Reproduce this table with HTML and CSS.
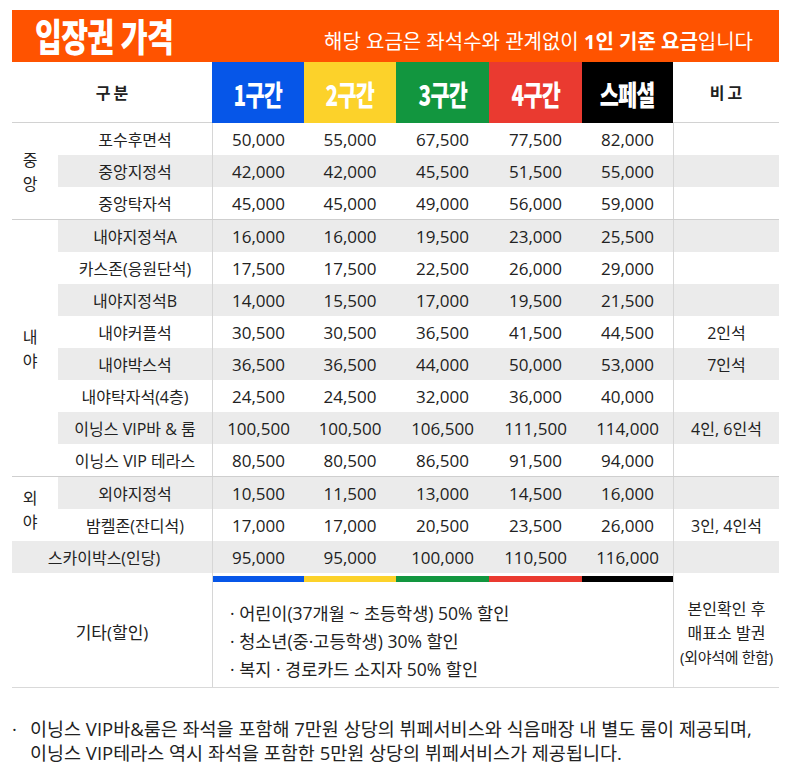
FILE: index.html
```html
<!DOCTYPE html>
<html lang="ko">
<head>
<meta charset="utf-8">
<title>입장권 가격</title>
<link rel="stylesheet" href="styles.css">
</head>
<body>
<div class="page">
  <header class="banner">
    <h1 class="title">입장권 가격</h1>
    <p class="subtitle">해당 요금은 좌석수와 관계없이 <strong>1인 기준 요금</strong>입니다</p>
  </header>

  <div class="thead">
    <div class="th-plain">구분</div>
    <div class="zone z1"><span>1구간</span></div>
    <div class="zone z2"><span>2구간</span></div>
    <div class="zone z3"><span>3구간</span></div>
    <div class="zone z4"><span>4구간</span></div>
    <div class="zone z5"><span>스페셜</span></div>
    <div class="th-plain">비고</div>
  </div>

  <div class="group first">
    <div class="glabel"><span>중</span><span>앙</span></div>
    <div class="grows">
      <div class="row"><div class="seat">포수후면석</div><div class="num first">50,000</div><div class="num">55,000</div><div class="num">67,500</div><div class="num">77,500</div><div class="num">82,000</div><div class="note"></div></div>
      <div class="row alt"><div class="seat">중앙지정석</div><div class="num first">42,000</div><div class="num">42,000</div><div class="num">45,500</div><div class="num">51,500</div><div class="num">55,000</div><div class="note"></div></div>
      <div class="row"><div class="seat">중앙탁자석</div><div class="num first">45,000</div><div class="num">45,000</div><div class="num">49,000</div><div class="num">56,000</div><div class="num">59,000</div><div class="note"></div></div>
    </div>
  </div>

  <div class="group">
    <div class="glabel"><span>내</span><span>야</span></div>
    <div class="grows">
      <div class="row alt"><div class="seat">내야지정석A</div><div class="num first">16,000</div><div class="num">16,000</div><div class="num">19,500</div><div class="num">23,000</div><div class="num">25,500</div><div class="note"></div></div>
      <div class="row"><div class="seat">카스존(응원단석)</div><div class="num first">17,500</div><div class="num">17,500</div><div class="num">22,500</div><div class="num">26,000</div><div class="num">29,000</div><div class="note"></div></div>
      <div class="row alt"><div class="seat">내야지정석B</div><div class="num first">14,000</div><div class="num">15,500</div><div class="num">17,000</div><div class="num">19,500</div><div class="num">21,500</div><div class="note"></div></div>
      <div class="row"><div class="seat">내야커플석</div><div class="num first">30,500</div><div class="num">30,500</div><div class="num">36,500</div><div class="num">41,500</div><div class="num">44,500</div><div class="note">2인석</div></div>
      <div class="row alt"><div class="seat">내야박스석</div><div class="num first">36,500</div><div class="num">36,500</div><div class="num">44,000</div><div class="num">50,000</div><div class="num">53,000</div><div class="note">7인석</div></div>
      <div class="row"><div class="seat">내야탁자석(4층)</div><div class="num first">24,500</div><div class="num">24,500</div><div class="num">32,000</div><div class="num">36,000</div><div class="num">40,000</div><div class="note"></div></div>
      <div class="row alt"><div class="seat">이닝스 VIP바 &amp; 룸</div><div class="num first">100,500</div><div class="num">100,500</div><div class="num">106,500</div><div class="num">111,500</div><div class="num">114,000</div><div class="note">4인, 6인석</div></div>
      <div class="row"><div class="seat">이닝스 VIP 테라스</div><div class="num first">80,500</div><div class="num">80,500</div><div class="num">86,500</div><div class="num">91,500</div><div class="num">94,000</div><div class="note"></div></div>
    </div>
  </div>

  <div class="group">
    <div class="glabel"><span>외</span><span>야</span></div>
    <div class="grows">
      <div class="row alt"><div class="seat">외야지정석</div><div class="num first">10,500</div><div class="num">11,500</div><div class="num">13,000</div><div class="num">14,500</div><div class="num">16,000</div><div class="note"></div></div>
      <div class="row"><div class="seat">밤켈존(잔디석)</div><div class="num first">17,000</div><div class="num">17,000</div><div class="num">20,500</div><div class="num">23,500</div><div class="num">26,000</div><div class="note">3인, 4인석</div></div>
    </div>
  </div>

  <div class="row sky alt"><div class="seat">스카이박스(인당)</div><div class="num first">95,000</div><div class="num">95,000</div><div class="num">100,000</div><div class="num">110,500</div><div class="num">116,000</div><div class="note"></div></div>

  <div class="etc">
    <div class="etc-label">기타(할인)</div>
    <div class="etc-main">
      <div class="bar"><i class="z1"></i><i class="z2"></i><i class="z3"></i><i class="z4"></i><i class="z5"></i></div>
      <ul class="discounts">
        <li>· 어린이(37개월 ~ 초등학생) 50% 할인</li>
        <li>· 청소년(중·고등학생) 30% 할인</li>
        <li>· 복지 · 경로카드 소지자 50% 할인</li>
      </ul>
    </div>
    <div class="etc-note">
      <span>본인확인 후</span>
      <span>매표소 발권</span>
      <span class="small">(외야석에 한함)</span>
    </div>
  </div>

  <div class="foot">
    <span class="dot">·</span>
    <p>이닝스 VIP바&amp;룸은 좌석을 포함해 7만원 상당의 뷔페서비스와 식음매장 내 별도 룸이 제공되며,<br>이닝스 VIP테라스 역시 좌석을 포함한 5만원 상당의 뷔페서비스가 제공됩니다.</p>
  </div>
</div>
</body>
</html>
```

FILE: styles.css
```css
body {
  margin: 0;
  padding: 10px 0 0 12px;
  background: #fff;
  color: #222;
  font-family: "Open Sans", "Noto Sans CJK KR", sans-serif;
}

.page {
  width: 767px;
}

.banner {
  height: 52px;
  box-sizing: border-box;
  padding: 0 26px 0 23px;
  background: #ff5300;
  color: #fff;
  display: flex;
  align-items: center;
  justify-content: space-between;
}

.title {
  margin: -3px 0 0;
  font-family: "Noto Sans CJK KR", sans-serif;
  font-weight: 900;
  font-size: 38px;
  line-height: 1;
  letter-spacing: -1px;
  white-space: nowrap;
  transform: scaleX(0.77);
  transform-origin: left center;
}

.subtitle {
  margin: 8px 0 0;
  font-size: 20px;
  white-space: nowrap;
  font-weight: 400;
}

.subtitle strong {
  font-weight: 700;
}

.thead {
  display: grid;
  grid-template-columns: 200px 92px 92px 93px 93px 91px 106px;
  height: 61px;
}

.th-plain {
  display: flex;
  align-items: center;
  justify-content: center;
  padding-left: 3px;
  border-bottom: 1px solid #d2d2d2;
  font-family: "Noto Sans CJK KR", sans-serif;
  font-weight: 700;
  font-size: 16px;
  letter-spacing: 3px;
}

.zone {
  display: flex;
  align-items: center;
  justify-content: center;
  padding-top: 3px;
  color: #fff;
}

.zone span {
  display: inline-block;
  font-family: "Noto Sans CJK KR", sans-serif;
  font-weight: 900;
  font-size: 28px;
  line-height: 1;
  letter-spacing: -1px;
  transform: scaleX(0.74);
}

.z1 { background: #0656e8; }
.z2 { background: #fcd22a; }
.z3 { background: #12963f; }
.z4 { background: #ea3a30; }
.z5 { background: #000; }

.group {
  display: flex;
  border-top: 1px solid #cfcfcf;
}

.group.first {
  border-top: 0;
}

.glabel {
  width: 46px;
  flex: none;
  box-sizing: border-box;
  padding-right: 10px;
  display: flex;
  flex-direction: column;
  align-items: center;
  justify-content: center;
  font-family: "Noto Sans CJK KR", sans-serif;
  font-size: 16px;
  line-height: 24px;
}

.grows {
  flex: 1;
}

.row {
  display: grid;
  grid-template-columns: 154px 92px 92px 93px 93px 91px 106px;
  height: 32px;
}

.row.sky {
  grid-template-columns: 200px 92px 92px 93px 93px 91px 106px;
}

.row.sky .seat {
  padding-right: 16px;
}

.row.alt {
  background: #ebebeb;
}

.row > div {
  display: flex;
  align-items: center;
  justify-content: center;
  white-space: nowrap;
}

.seat {
  font-size: 16px;
}

.num {
  font-size: 17px;
}

.num.first {
  border-left: 1px solid #d6d6d6;
}

.note {
  border-left: 1px solid #d6d6d6;
  font-size: 16px;
}

.etc {
  display: grid;
  grid-template-columns: 200px 461px 106px;
  border-bottom: 1px solid #d9d9d9;
}

.etc-label {
  display: flex;
  align-items: center;
  justify-content: center;
  padding-top: 2px;
  font-size: 17px;
}

.etc-main {
  border-left: 1px solid #d6d6d6;
}

.bar {
  display: grid;
  grid-template-columns: 91px 92px 93px 93px 91px;
  height: 6px;
  margin-top: 3px;
}

.discounts {
  list-style: none;
  margin: 0;
  padding: 17px 0 4px 17px;
  font-size: 17.5px;
  line-height: 28px;
}

.etc-note {
  border-left: 1px solid #d6d6d6;
  display: flex;
  flex-direction: column;
  align-items: center;
  justify-content: center;
  padding-top: 6px;
  font-size: 16px;
  line-height: 24px;
  white-space: nowrap;
}

.etc-note .small {
  font-size: 15px;
  letter-spacing: -0.3px;
}

.foot {
  display: flex;
  margin-top: 29px;
  font-size: 18.5px;
  line-height: 24px;
}

.foot .dot {
  width: 18px;
  flex: none;
}

.foot p {
  margin: 0;
  white-space: nowrap;
}
```
